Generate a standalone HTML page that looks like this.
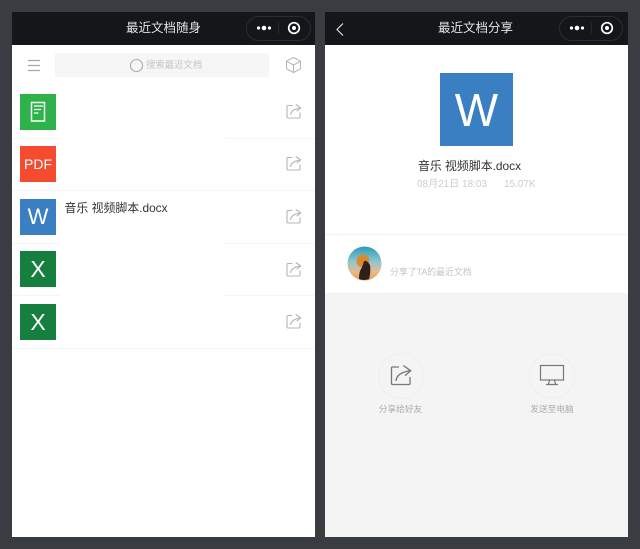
<!DOCTYPE html>
<html lang="zh">
<head>
<meta charset="utf-8">
<title>最近文档</title>
<style>
html,body{margin:0;padding:0}
body{width:640px;height:549px;position:relative;overflow:hidden;background:#393c41;font-family:"Liberation Sans","Noto Sans CJK SC",sans-serif}
div,span,svg{position:absolute;display:block}
.panel{top:12px;width:303px;height:525px;background:#fff;overflow:hidden}
.bar{left:0;top:0;width:303px;height:33px;background:#15161a}
.title{top:0;height:33px;line-height:33px;color:#e4e4e4;font-size:12.5px;text-align:center;white-space:nowrap}
.cap{left:234px;top:4px;width:63px;height:23px;border:1px solid #2c2d31;border-radius:13px}
.ico{left:8px;width:36px;height:36px;color:#fff;text-align:center;line-height:36px;font-size:22px}
.x{font-size:23px}
.line{left:0;width:303px;height:1px;background:#f5f5f5}
.cover{left:48px;width:165px;height:3px;background:#fff}
.txt{white-space:nowrap}
.sh{left:274px;width:16px;height:16px}
</style>
</head>
<body>
<div class="panel" style="left:12px">
  <div class="bar"></div>
  <div class="title" style="left:0;width:303px">最近文档随身</div>
  <div class="cap"></div>
  <svg style="left:234px;top:4px" width="66" height="25" viewBox="0 0 66 25"><circle cx="12.500" cy="12" r="1.600" fill="#fff"/><circle cx="18" cy="12" r="2.300" fill="#fff"/><circle cx="23.500" cy="12" r="1.600" fill="#fff"/><path d="M32.500 6V18" stroke="#26272b"/><circle cx="48" cy="12" r="5.300" fill="none" stroke="#fff" stroke-width="1.700"/><circle cx="48" cy="12" r="2" fill="#fff"/></svg>

  <svg style="left:15px;top:47px" width="14" height="13" viewBox="0 0 14 13"><path d="M1 1.500H13M1 6.500H13M1 11.500H13" stroke="#a8a8a8" stroke-width="1.200"/></svg>
  <div style="left:43px;top:41px;width:214px;height:24px;background:#f6f6f6"></div>
  <svg style="left:117px;top:46px" width="15" height="15" viewBox="0 0 15 15"><circle cx="7.500" cy="7.500" r="6" fill="none" stroke="#a9a9a9" stroke-width="1.100"/></svg>
  <div class="txt" style="left:134px;top:46px;font-size:9.400px;line-height:14px;color:#c4c4c4">搜索最近文档</div>
  <svg style="left:273px;top:44px" width="17" height="18" viewBox="0 0 17 18"><path d="M8.500 1.500L15.500 5.200V12.800L8.500 16.500L1.500 12.800V5.200ZM1.500 5.200L8.500 9L15.500 5.200M8.500 9V16.500" fill="none" stroke="#b5b5b5" stroke-width="1"/></svg>

  <div class="ico" style="top:82px;background:#2eb24a"></div>
  <svg style="left:18px;top:89px" width="16" height="22" viewBox="0 0 16 22"><rect x="1.500" y="1.500" width="13" height="18.500" fill="none" stroke="#fff" stroke-width="1.500"/><path d="M4 5H13M4 8.500H11M4 12H8.500" stroke="#fff" stroke-width="1.300"/></svg>
  <div class="ico" style="top:134px;background:#f54c30;font-size:14px">PDF</div>
  <div class="ico" style="top:187px;background:#3a7fc1">W</div>
  <div class="ico x" style="top:239px;background:#157f3f">X</div>
  <div class="ico x" style="top:292px;background:#157f3f">X</div>

  <div class="line" style="top:126px"></div>
  <div class="line" style="top:178px"></div>
  <div class="line" style="top:231px"></div>
  <div class="line" style="top:283px"></div>
  <div class="line" style="top:336px"></div>
  <div class="cover" style="top:125px"></div>
  <div class="cover" style="top:230px"></div>
  <div class="cover" style="top:282px"></div>

  <div class="txt" style="left:52.500px;top:187.500px;font-size:11.900px;line-height:16px;color:#333">音乐 视频脚本.docx</div>

  <svg class="sh" style="top:91px" viewBox="0 0 16 16"><path d="M6.500 2.500H2.200Q1 2.500 1 3.700V13.800Q1 15 2.200 15H12.800Q14 15 14 13.800V9.500M4.500 12Q5 6.500 14 5M9.800 1.500L14.600 4.900L10.800 8.200" fill="none" stroke="#b4b4b4" stroke-width="1.100"/></svg>
  <svg class="sh" style="top:143px" viewBox="0 0 16 16"><path d="M6.500 2.500H2.200Q1 2.500 1 3.700V13.800Q1 15 2.200 15H12.800Q14 15 14 13.800V9.500M4.500 12Q5 6.500 14 5M9.800 1.500L14.600 4.900L10.800 8.200" fill="none" stroke="#b4b4b4" stroke-width="1.100"/></svg>
  <svg class="sh" style="top:196px" viewBox="0 0 16 16"><path d="M6.500 2.500H2.200Q1 2.500 1 3.700V13.800Q1 15 2.200 15H12.800Q14 15 14 13.800V9.500M4.500 12Q5 6.500 14 5M9.800 1.500L14.600 4.900L10.800 8.200" fill="none" stroke="#b4b4b4" stroke-width="1.100"/></svg>
  <svg class="sh" style="top:249px" viewBox="0 0 16 16"><path d="M6.500 2.500H2.200Q1 2.500 1 3.700V13.800Q1 15 2.200 15H12.800Q14 15 14 13.800V9.500M4.500 12Q5 6.500 14 5M9.800 1.500L14.600 4.900L10.800 8.200" fill="none" stroke="#b4b4b4" stroke-width="1.100"/></svg>
  <svg class="sh" style="top:301px" viewBox="0 0 16 16"><path d="M6.500 2.500H2.200Q1 2.500 1 3.700V13.800Q1 15 2.200 15H12.800Q14 15 14 13.800V9.500M4.500 12Q5 6.500 14 5M9.800 1.500L14.600 4.900L10.800 8.200" fill="none" stroke="#b4b4b4" stroke-width="1.100"/></svg>
</div>

<div class="panel" style="left:325px">
  <div class="bar"></div>
  <svg style="left:10px;top:10px" width="10" height="15" viewBox="0 0 10 15"><path d="M8 1.500L2 7.500L8 13.500" fill="none" stroke="#e8e8e8" stroke-width="1.100"/></svg>
  <div class="title" style="left:-1px;width:303px">最近文档分享</div>
  <div class="cap" style="width:62px"></div>
  <svg style="left:234px;top:4px" width="66" height="25" viewBox="0 0 66 25"><circle cx="12.500" cy="12" r="1.600" fill="#fff"/><circle cx="18" cy="12" r="2.300" fill="#fff"/><circle cx="23.500" cy="12" r="1.600" fill="#fff"/><path d="M32.500 6V18" stroke="#26272b"/><circle cx="48" cy="12" r="5.300" fill="none" stroke="#fff" stroke-width="1.700"/><circle cx="48" cy="12" r="2" fill="#fff"/></svg>

  <div style="left:115px;top:61px;width:73px;height:73px;background:#3a7fc1;color:#fff;text-align:center;line-height:74px;font-size:46px">W</div>
  <div class="txt" style="left:-7px;width:303px;top:146px;text-align:center;font-size:11.900px;line-height:16px;color:#333">音乐 视频脚本.docx</div>
  <div class="txt" style="left:92px;top:166px;font-size:10px;line-height:14px;color:#cdcdcd">08月21日 18:03</div>
  <div class="txt" style="left:179px;top:166px;font-size:10px;line-height:14px;color:#cdcdcd">15.07K</div>
  <div class="line" style="top:222px;background:#f3f3f3"></div>

  <svg style="left:22px;top:234px" width="35" height="35" viewBox="0 0 35 35">
    <defs>
      <linearGradient id="g" x1="0" y1="0" x2="0" y2="1"><stop offset="0" stop-color="#2b9cb8"/><stop offset=".45" stop-color="#8fc7d0"/><stop offset=".75" stop-color="#eab98a"/><stop offset="1" stop-color="#e79a55"/></linearGradient>
    </defs>
    <circle cx="17.500" cy="17.500" r="17" fill="url(#g)"/>
    <circle cx="16" cy="15" r="6.500" fill="#d98a2c"/>
    <path d="M17 15Q20 14 23 19Q24 26 22 33Q17 35 12 33Q12 26 14 23Q16 20 17 15Z" fill="#2d1f1a"/>
  </svg>
  <div class="txt" style="left:65px;top:254px;font-size:8.900px;line-height:13px;color:#c4c4c4">分享了TA的最近文档</div>

  <div style="left:0;top:281px;width:303px;height:244px;background:#f4f4f4"></div>
  <div style="left:53px;top:341px;width:44px;height:44px;border:1px solid #eeeeee;border-radius:50%"></div>
  <svg style="left:65px;top:352px" width="22" height="22" viewBox="0 0 22 22"><path d="M9 3H2.500Q1.500 3 1.500 4V19.500Q1.500 20.500 2.500 20.500H19Q20 20.500 20 19.500V13M6 17Q6.500 9 20 6.700M13.300 1.500L20.700 6.700L15 11.700" fill="none" stroke="#777" stroke-width="1.300"/></svg>
  <div class="txt" style="left:0;width:151px;top:390px;text-align:center;font-size:8.700px;line-height:14px;color:#ababab">分享给好友</div>

  <div style="left:204px;top:341px;width:44px;height:44px;border:1px solid #eeeeee;border-radius:50%"></div>
  <svg style="left:214px;top:352px" width="26" height="22" viewBox="0 0 26 22"><rect x="1.500" y="1.500" width="23" height="14.500" fill="none" stroke="#777" stroke-width="1.200"/><path d="M10.500 16L9.500 20M15.500 16L16.500 20M7 20.500H19" fill="none" stroke="#777" stroke-width="1.200"/></svg>
  <div class="txt" style="left:151px;width:152px;top:390px;text-align:center;font-size:8.700px;line-height:14px;color:#ababab">发送至电脑</div>
</div>
</body>
</html>
